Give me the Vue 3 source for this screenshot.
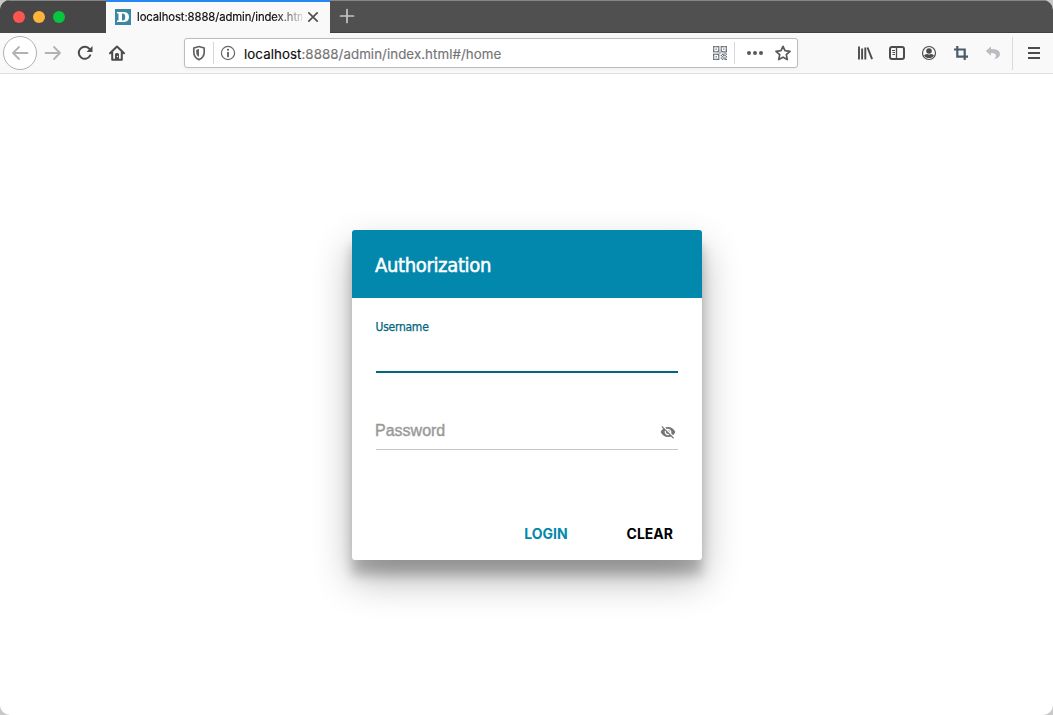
<script setup>
const qr = [
  '11111011111', '10001010001', '10101010101', '10001010001', '11111011111', '00000100010',
  '11111001101', '10001010110', '10101001001', '10001010110', '11111001011'
]
const cells = qr.flatMap((row, y) => [...row].map((v, x) => ({ x, y, v }))).filter(c => c.v === '1')
</script>

<template>
  <div class="window">
    <header class="tabs">
      <div class="lights"><i class="red" /><i class="amber" /><i class="green" /></div>
      <div class="tab">
        <svg class="favicon" width="16" height="16" viewBox="0 0 16 16"><rect width="16" height="16" fill="#3987a2" /><path d="M2 3h6.3Q14 3 14 8t-5.700 5H2v-1.500h1.500v-7H2zM7 4.500v7h.8Q10.200 11.500 10.200 8T7.800 4.500z" fill="#fff" fill-rule="evenodd" /></svg>
        <span class="tabname">localhost:8888/admin/index.html</span>
        <svg class="close" width="16" height="16" viewBox="0 0 16 16"><path d="M3.800 3.800l8.400 8.400M12.200 3.800l-8.400 8.400" stroke="#505052" stroke-width="1.700" stroke-linecap="round" /></svg>
      </div>
      <svg class="plus" width="16" height="16" viewBox="0 0 16 16"><path d="M8 1.500v13M1.500 8h13" stroke="#c5c5c5" stroke-width="1.700" stroke-linecap="round" /></svg>
    </header>
    <nav class="toolbar">
      <div class="back"><svg width="18" height="16" viewBox="0 0 18 16"><path d="M16.500 8H2M8 2L2 8l6 6" /></svg></div>
      <svg class="forward" width="18" height="16" viewBox="0 0 18 16"><path d="M1.500 8H16M10 2l6 6-6 6" /></svg>
      <svg class="reload" width="16" height="16" viewBox="0 0 16 16"><path d="M13.200 10.400A6 6 0 1 1 12.600 4.200" fill="none" stroke="#4c4c4e" stroke-width="2" stroke-linecap="round" /><path d="M15.500 1v6h-6z" fill="#4c4c4e" /></svg>
      <svg class="home" width="16" height="16" viewBox="0 0 16 16"><path d="M1 8.300L8 1.500l7 6.800M3.200 7v7.800h9.600V7" fill="none" stroke="#4c4c4e" stroke-width="2" stroke-linecap="round" stroke-linejoin="round" /><path d="M6 15V9.500Q6 8 7.500 8h1Q10 8 10 9.500V15z" fill="#4c4c4e" /><circle cx="8.400" cy="11.500" r=".65" fill="#fff" /></svg>
      <div class="urlbar">
        <svg class="shield" width="16" height="16" viewBox="0 0 16 16"><path d="M8 1.500l5.200 1.500v4.200c0 3.600-2 6-5.200 7.400-3.200-1.400-5.200-3.800-5.200-7.400V3z" fill="none" stroke="#626264" stroke-width="1.700" stroke-linejoin="round" /><path d="M8 4v8C6 10.800 5.200 9.300 5.200 7.300V4.800z" fill="#626264" /></svg>
        <i class="rule" />
        <svg class="info" width="16" height="16" viewBox="0 0 16 16"><circle cx="8" cy="8" r="6.600" fill="none" stroke="#68686a" stroke-width="1.200" /><path d="M8 7.500v4" stroke="#555" stroke-width="1.700" stroke-linecap="round" /><circle cx="8" cy="4.800" r="1.050" fill="#555" /></svg>
        <span class="address"><b>localhost</b>:8888/admin/index.html#/home</span>
        <svg class="qr" width="14" height="14" viewBox="0 0 11 11"><rect v-for="(c, i) in cells" :key="i" :x="c.x" :y="c.y" width="1" height="1" fill="#626875" /></svg>
        <i class="rule second" />
        <svg class="dots" width="18" height="16" viewBox="0 0 18 16"><circle cx="3" cy="8" r="2" /><circle cx="9" cy="8" r="2" /><circle cx="15" cy="8" r="2" /></svg>
        <svg class="star" width="16" height="16" viewBox="0 0 16 16"><path d="M8 1.300l2 4.400 5 .6-3.700 3.400 1 4.900L8 12.200l-4.300 2.400 1-4.900L1 6.300l5-.6z" fill="none" stroke="#59595b" stroke-width="1.700" stroke-linejoin="round" /></svg>
      </div>
      <div class="tools">
        <svg width="16" height="16" viewBox="0 0 16 16" fill="none" stroke="#4c4c4e" stroke-width="1.900"><path d="M2 1.500v13M5.100 3.500v11M8.300 2.500v12M10.500 2.500l4.600 11.600" /></svg>
        <svg width="16" height="16" viewBox="0 0 16 16" fill="none" stroke="#4c4c4e"><rect x="1" y="2" width="14" height="12" rx="2" stroke-width="2" /><path d="M7.500 2v12" stroke-width="1.300" /><path d="M3 5.500h3M3.500 7.500H6M3.500 9.500H6" /></svg>
        <svg width="16" height="16" viewBox="0 0 16 16"><circle cx="8" cy="8" r="6.500" fill="none" stroke="#4c4c4e" stroke-width="1.200" /><circle cx="8" cy="6" r="2.800" fill="#4c4c4e" /><path d="M3 10.200Q5 9 6.200 9q1.800 1 3.600 0Q11 9 13 10.200 11.500 13 8 13T3 10.200z" fill="#4c4c4e" /></svg>
        <svg width="16" height="16" viewBox="0 0 16 16" fill="none" stroke="#4b5b6b" stroke-width="2.200"><path d="M4.300 1v10.700H15M1 4.500h10.700V15" /></svg>
        <svg width="16" height="16" viewBox="0 0 16 16"><path d="M6 1.500L.8 6 6 10.700V8q5-.2 5 3 0 1.700-2 3 6-.8 6-5 0-5-9-5z" fill="#b9bdc2" /></svg>
        <i class="toolrule" />
        <svg class="menu" width="16" height="16" viewBox="0 0 16 16"><path d="M2 3h12M2 8h12M2 13h12" stroke="#4c4c4e" stroke-width="2" /></svg>
      </div>
    </nav>
    <main>
      <form class="card" @submit.prevent>
        <h1><span>Authorization</span></h1>
        <div class="fields">
          <label class="username">Username</label>
          <div class="password">
            <span>Password</span>
            <svg width="16" height="16" viewBox="0 0 24 24" fill="#747474"><path d="M12 7c2.760 0 5 2.240 5 5 0 .65-.13 1.260-.36 1.830l2.920 2.920c1.510-1.260 2.700-2.890 3.430-4.750-1.730-4.390-6-7.500-11-7.500-1.400 0-2.740.25-3.980.7l2.160 2.160C10.740 7.130 11.350 7 12 7zM2 4.270l2.280 2.280.46.46C3.080 8.300 1.780 10.020 1 12c1.730 4.390 6 7.500 11 7.500 1.550 0 3.030-.3 4.380-.84l.42.42L19.730 22 21 20.730 3.270 3 2 4.270zM7.530 9.800l1.550 1.550c-.05.21-.08.43-.08.65 0 1.660 1.340 3 3 3 .22 0 .44-.03.65-.08l1.550 1.550c-.67.33-1.410.53-2.200.53-2.760 0-5-2.240-5-5 0-.79.2-1.530.53-2.200zm4.310-.78l3.150 3.150.02-.16c0-1.660-1.340-3-3-3l-.17.01z" /></svg>
          </div>
        </div>
        <footer><button class="login">LOGIN</button><button class="clear">CLEAR</button></footer>
      </form>
    </main>
  </div>
</template>

<style>
body { background: #c8c8c8; overflow: hidden; }
</style>
<style scoped>
* { box-sizing: border-box; }
svg { display: block; flex: none; }
.window { width: 1053px; height: 715px; background: #fff; border-radius: 10px; overflow: hidden; display: flex; flex-direction: column; font-family: Inter, "Liberation Sans", sans-serif; }
.tabs { height: 33px; background: #505050; display: flex; align-items: center; box-shadow: inset 0 1px #858585, inset 0 -1px #404040; }
.lights { width: 106px; height: 33px; display: flex; align-items: center; gap: 8px; padding-left: 13px; background: #474747; box-shadow: inset 0 1px #858585; }
.lights i { width: 12px; height: 12px; border-radius: 50%; }
.red { background: #ff5551; }
.amber { background: #ffb338; }
.green { background: #05c63e; }
.tab { width: 224px; height: 33px; display: flex; align-items: center; padding-left: 9px; background: #f9f9fa; border-top: 2px solid #2488f5; }
.favicon, .close { margin-bottom: 2px; }
.tabname { width: 165px; margin: 0 0 1px 6px; overflow: hidden; white-space: nowrap; font-size: 11.300px; letter-spacing: -.09px; color: #0c0c0d; -webkit-text-stroke: .15px #0c0c0d; mask-image: linear-gradient(90deg, #000 138px, transparent 170px); }
.close { margin-left: 3px; }
.plus { margin-left: 9px; margin-bottom: 1px; }
.toolbar { height: 41px; background: #f9f9fa; border-bottom: 1px solid #dedede; display: flex; align-items: center; flex: none; }
.back { width: 34px; height: 34px; margin-left: 3px; border: 1px solid #b0b0b0; border-radius: 50%; background: #fff; display: flex; align-items: center; justify-content: center; }
.back path, .forward path { fill: none; stroke: #b2b2b2; stroke-width: 1.800; stroke-linecap: round; stroke-linejoin: round; }
.forward { margin-left: 7px; }
.reload { margin-left: 15px; }
.home { margin-left: 16px; }
.urlbar { width: 614px; height: 30px; margin-left: 59px; border: 1px solid #bcbcbc; border-radius: 3px; background: #fff; display: flex; align-items: center; padding-left: 6px; box-shadow: 0 1px 4px #0000000d; }
.rule { width: 1px; height: 22px; background: #d7d7d9; margin: 0 6px; }
.address { width: 460px; margin: 1px 0 0 8px; white-space: nowrap; font-size: 13.300px; letter-spacing: .07px; color: #747476; -webkit-text-stroke: .15px; }
.address b { font-weight: 400; color: #0c0c0d; }
.qr { margin-left: 9px; }
.second { margin: 0 11px 0 7px; }
.dots { fill: #59595b; }
.star { margin-left: 11px; }
.tools { display: flex; align-items: center; gap: 16px; margin-left: 59px; }
.toolrule { width: 1px; height: 33px; background: #d9d9db; margin-left: -5px; }
.menu { margin-left: -3px; }
main { flex: 1; display: flex; justify-content: center; align-items: flex-start; padding: 156px 0 0 1px; }
.card { width: 350px; height: 330px; display: flex; flex-direction: column; border-radius: 3px; background: #fff; box-shadow: 0 19px 38px rgba(0,0,0,.3), 0 15px 12px rgba(0,0,0,.22); }
h1 { height: 68px; margin: 0; padding: 1px 23px 0; display: flex; align-items: center; background: #0288ad; border-radius: 3px 3px 0 0; color: #fff; font: 400 20px "DejaVu Sans Condensed", "DejaVu Sans", sans-serif; font-stretch: condensed; letter-spacing: -.35px; -webkit-text-stroke: .5px #fff; }
.fields { height: 212px; padding: 0 24px; display: flex; flex-direction: column; }
.username { height: 75px; padding-top: 22px; border-bottom: 2px solid #006681; color: #006681; font: 400 12px/14px "DejaVu Sans Condensed", "DejaVu Sans", sans-serif; font-stretch: condensed; letter-spacing: -.25px; text-indent: -.5px; -webkit-text-stroke: .25px #006681; }
.password { height: 77px; padding: 38px 2px 0 0; border-bottom: 1px solid #c7c7c7; display: flex; align-items: center; justify-content: space-between; color: #999; font: 16px "Liberation Sans", Arial, sans-serif; -webkit-text-stroke: .4px #999; }
.password span { margin: 2px 0 0 -1px; }
.password svg { stroke: none; margin-top: 4px; }
footer { height: 50px; display: flex; align-items: center; justify-content: flex-end; gap: 59px; padding: 0 29px 3px; }
button { border: 0; padding: 0; background: none; font: 700 14px Inter, sans-serif; }
.login { color: #0288ad; }
.clear { color: #000; }
</style>
